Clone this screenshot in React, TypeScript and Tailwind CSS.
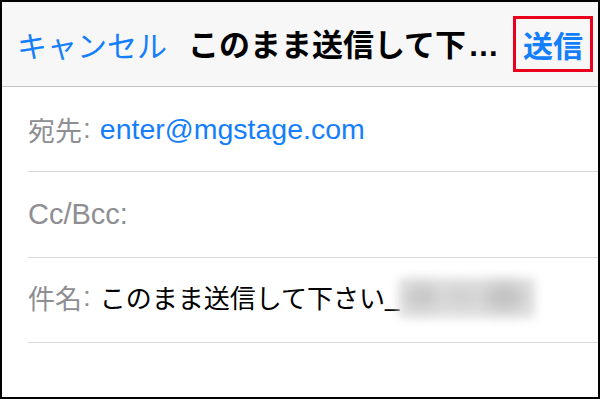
import React from "react";

const latin = { fontFamily: '"Liberation Sans", "Noto Sans CJK JP", sans-serif' };
const jp = { fontFamily: '"Noto Sans CJK JP", sans-serif' };

export default function App() {
  return (
    <div className="w-[600px] h-[399px] border-2 border-black bg-white overflow-hidden flex flex-col" style={latin}>
      <div className="h-[85px] shrink-0 bg-[#f7f7f7] border-b border-[#c4c4c6] flex items-center pl-[15px] pr-[5px]">
        <span className="text-[30px] leading-none text-[#157efb] whitespace-nowrap" style={jp}>
          キャンセル
        </span>
        <span className="ml-[21px] text-[31px] leading-none font-bold text-black whitespace-nowrap flex items-baseline">
          <span style={jp}>このまま送信して下</span>
          <span className="ml-[2px]" style={{ fontFamily: '"Liberation Sans", sans-serif' }}>…</span>
        </span>
        <div className="ml-auto w-[80px] h-[56px] border-[3px] border-[#e8001c] flex items-center justify-center">
          <span className="text-[30px] leading-none font-bold text-[#157efb]" style={jp}>
            送信
          </span>
        </div>
      </div>
      <div className="ml-[26px] flex flex-col">
        <div className="h-[85px] border-b border-[#d8d8d8] flex items-center">
          <span className="text-[27px] leading-none text-[#8e8e93]" style={jp}>宛先</span>
          <span className="text-[28px] leading-none text-[#8e8e93] ml-[1px]">:</span>
          <span className="text-[28.5px] leading-none text-[#157efb] ml-[9px]">enter@mgstage.com</span>
        </div>
        <div className="h-[86px] border-b border-[#d8d8d8] flex items-center">
          <span className="text-[29px] leading-none text-[#8e8e93]">Cc/Bcc:</span>
        </div>
        <div className="h-[85px] border-b border-[#d8d8d8] flex items-center pb-[6px]">
          <span className="text-[27px] leading-none text-[#8e8e93]" style={jp}>件名</span>
          <span className="text-[28px] leading-none text-[#8e8e93] ml-[1px]">:</span>
          <span className="text-[26px] leading-none text-black ml-[9px]" style={jp}>このまま送信して下さい</span>
          <span className="text-[26px] leading-none text-black">_</span>
          <div className="relative w-[140px] h-[46px] mt-[4px]">
            <div className="absolute left-[0px] top-[2px] w-[136px] h-[40px] bg-[#e2e2e2] blur-[5px]" />
            <div className="absolute left-[6px] top-[10px] w-[34px] h-[22px] bg-[#c4c4c4] blur-[8px] rounded-full" />
            <div className="absolute left-[44px] top-[12px] w-[36px] h-[18px] bg-[#cdcdcd] blur-[8px] rounded-full" />
            <div className="absolute left-[84px] top-[9px] w-[42px] h-[24px] bg-[#c0c0c0] blur-[8px] rounded-full" />
          </div>
        </div>
      </div>
    </div>
  );
}
